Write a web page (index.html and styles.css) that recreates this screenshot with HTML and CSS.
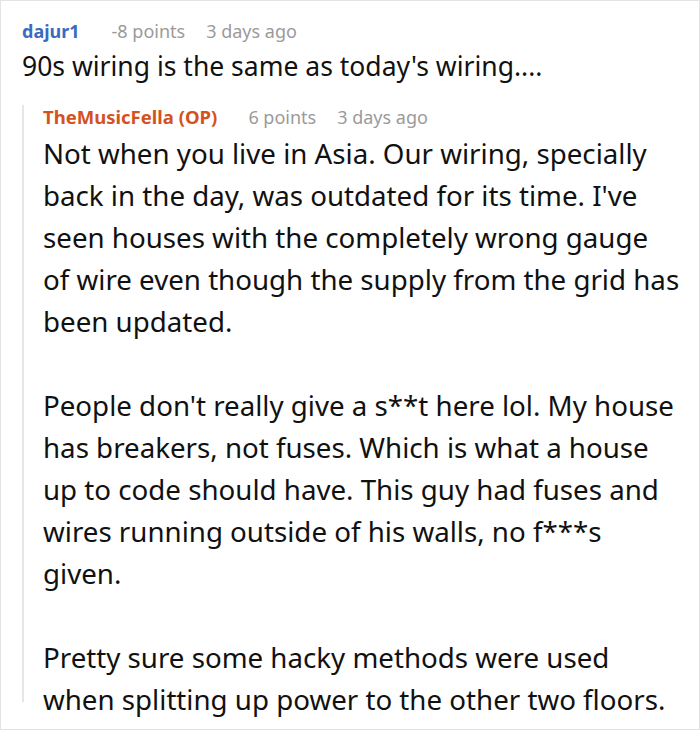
FILE: index.html
```html
<!DOCTYPE html>
<html>
<head>
<meta charset="utf-8">
<link rel="stylesheet" href="styles.css">
</head>
<body>
<div class="frame">
  <div class="comment">
    <div class="meta">
      <span class="user user-blue">dajur1</span>
      <span class="info">-8 points</span>
      <span class="info">3 days ago</span>
    </div>
    <p class="text">90s wiring is the same as today's wiring....</p>
    <div class="reply">
      <div class="meta reply-meta">
        <span class="user user-orange">TheMusicFella (OP)</span>
        <span class="info">6 points</span>
        <span class="info">3 days ago</span>
      </div>
      <div class="reply-body">
        <p>Not when you live in Asia. Our wiring, specially back in the day, was outdated for its time. I've seen houses with the completely wrong gauge of&nbsp;wire even though the supply from the grid has been updated.</p>
        <p>People don't really give a s**t here lol. My house has breakers, not fuses. Which is what a house up to code should have. This guy had fuses and wires running outside of his walls, no f***s given.</p>
        <p>Pretty sure some hacky methods were used when splitting up power to the other two floors.</p>
      </div>
    </div>
  </div>
</div>
</body>
</html>
```

FILE: styles.css
```css
html, body {
  margin: 0;
  padding: 0;
  background: #fff;
}
.frame {
  width: 700px;
  height: 730px;
  box-sizing: border-box;
  border: 1px solid #e3e3e3;
  padding: 18px 14px 0 21px;
  overflow: hidden;
  font-family: "Noto Sans", "Open Sans", sans-serif;
  color: #111;
}
.meta {
  display: flex;
  align-items: baseline;
  font-size: 18px;
  line-height: 24px;
}
.user {
  font-weight: 700;
  margin-right: 32px;
}
.user-blue { color: #3a6bbf; }
.user-orange { color: #d4521f; }
.info {
  color: #9a9a9a;
  margin-right: 21px;
}
.text {
  margin: 5px 0 0;
  font-size: 26.5px;
  line-height: 36px;
}
.reply {
  margin-top: 31px;
  border-left: 2px solid #e6e6e6;
  padding-left: 19px;
  height: 597px;
}
.reply-meta {
  margin-top: -10px;
  line-height: 24px;
}
.reply-meta .user {
  font-size: 18.5px;
  margin-right: 31px;
}
.reply-meta .info {
  margin-right: 21px;
}
.reply-body {
  margin-top: 3px;
  font-size: 27.7px;
  line-height: 42px;
}
.reply-body p {
  margin: 0 0 42px;
}
```
